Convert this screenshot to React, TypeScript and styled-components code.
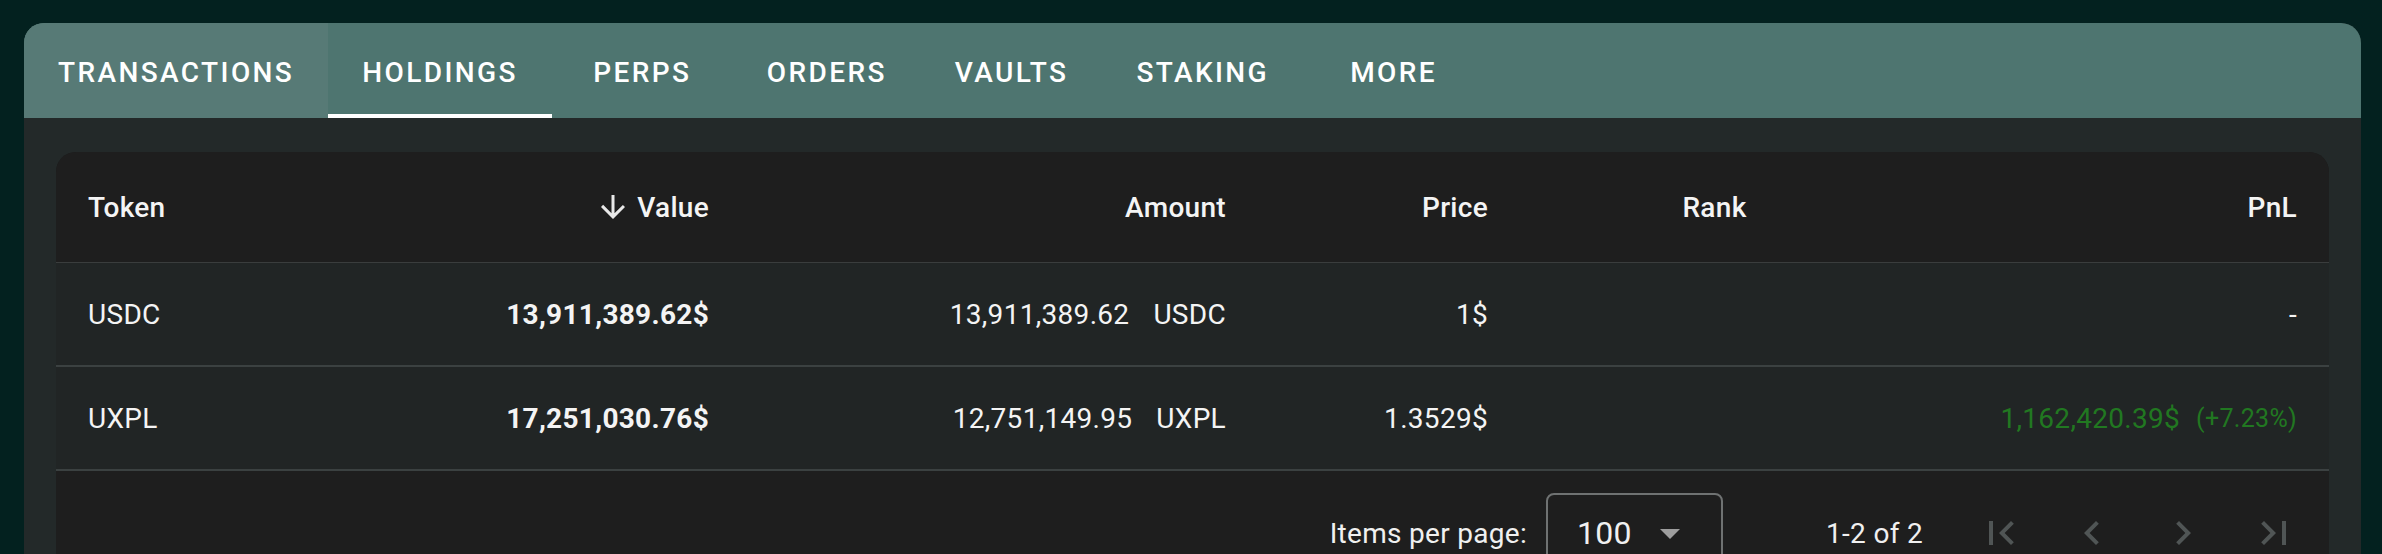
import * as React from 'react';
import styled, { createGlobalStyle } from 'styled-components';

const GlobalStyle = createGlobalStyle`
    html, body {
        margin: 0;
        height: 100%;
        overflow: hidden;
    }

    body {
        background: #03211f;
        font-family: Roboto, "Noto Sans", sans-serif;
        color: #fff;
    }
`;

const Page = styled.div`
    padding: 23px 21px 0 24px;
`;

const Card = styled.section`
    border-radius: 20px 20px 0 0;
    overflow: hidden;
    background: #232929;
`;

const TabBar = styled.nav`
    display: flex;
    height: 95px;
    background: #4e7570;
`;

const Tab = styled.div<{ $active?: boolean; $hover?: boolean }>`
    min-width: 181px;
    box-sizing: border-box;
    padding: 3px 34px 0;
    display: flex;
    align-items: center;
    justify-content: center;
    font-size: 28px;
    font-weight: 500;
    letter-spacing: 2.4px;
    text-transform: uppercase;
    color: #fff;
    background: ${p => (p.$hover ? '#577a76' : 'transparent')};
    box-shadow: ${p => (p.$active ? 'inset 0 -4px 0 #fff' : 'none')};
`;

const Content = styled.div`
    padding: 34px 32px 0;
`;

const TableCard = styled.div`
    border-radius: 20px 20px 0 0;
    overflow: hidden;
    background: #1e1e1e;
`;

const Row = styled.div<{ $head?: boolean }>`
    display: grid;
    grid-template-columns: 300px 385px 517px 262px 389px 1fr;
    height: ${p => (p.$head ? '110px' : '102px')};
    background: ${p => (p.$head ? '#1e1e1e' : '#212525')};
    border-bottom: ${p => (p.$head ? '1px solid #3a3d3d' : '2px solid #3b4141')};
    font-size: 28px;
    letter-spacing: 0.3px;
    font-weight: ${p => (p.$head ? 500 : 400)};
`;

const Cell = styled.div<{ $align?: 'left' | 'right' | 'center'; $bold?: boolean }>`
    padding: 0 32px;
    display: flex;
    align-items: center;
    justify-content: ${p =>
        p.$align === 'right' ? 'flex-end' : p.$align === 'center' ? 'center' : 'flex-start'};
    font-weight: ${p => (p.$bold ? 700 : 'inherit')};
    color: #f4f4f4;
    white-space: nowrap;
`;

const SortIcon = styled.svg`
    width: 36px;
    height: 36px;
    margin-right: 6px;
    fill: #e8e8e8;
`;

const Symbol = styled.span`
    margin-left: 24px;
`;

const Gain = styled.span`
    color: #217821;
`;

const GainPct = styled.span`
    margin-left: 16px;
    font-size: 25px;
    color: #217821;
`;

const Footer = styled.div`
    display: flex;
    align-items: center;
    justify-content: flex-end;
    height: 124px;
    padding-right: 10px;
    background: #1e1e1e;
    font-size: 28px;
    letter-spacing: 0.3px;
    color: #f0f0f0;
`;

const Label = styled.span`
    margin-right: 19px;
`;

const SelectBox = styled.div`
    width: 177px;
    height: 80px;
    box-sizing: border-box;
    border: 2px solid #6f7272;
    border-radius: 8px;
    display: flex;
    align-items: center;
    padding-left: 29px;
    margin-right: 103px;
    font-size: 32px;
`;

const DropIcon = styled.svg`
    width: 48px;
    height: 48px;
    margin-left: 14px;
    fill: #9e9e9e;
`;

const Displayed = styled.span`
    margin-right: 32px;
`;

const PageButton = styled.div`
    width: 91px;
    display: flex;
    justify-content: center;
    svg {
        width: 48px;
        height: 48px;
        fill: #505555;
    }
`;

interface Holding {
    token: string;
    value: string;
    amount: string;
    price: string;
    pnl?: string;
    pct?: string;
}

const holdings: Holding[] = [
    { token: 'USDC', value: '13,911,389.62$', amount: '13,911,389.62', price: '1$' },
    {
        token: 'UXPL',
        value: '17,251,030.76$',
        amount: '12,751,149.95',
        price: '1.3529$',
        pnl: '1,162,420.39$',
        pct: '(+7.23%)'
    }
];

const tabs = ['Transactions', 'Holdings', 'Perps', 'Orders', 'Vaults', 'Staking', 'More'];

const pageIcons = [
    'M18.41 16.59L13.82 12l4.59-4.59L17 6l-6 6 6 6zM6 6h2v12H6z',
    'M15.41 16.59L10.83 12l4.58-4.59L14 6l-6 6 6 6 1.41-1.41z',
    'M8.59 16.59L13.17 12 8.59 7.41 10 6l6 6-6 6-1.41-1.41z',
    'M5.59 7.41L10.18 12l-4.59 4.59L7 18l6-6-6-6zM16 6h2v12h-2z'
];

export default function App(): JSX.Element {
    return (
        <Page>
            <GlobalStyle />
            <Card>
                <TabBar>
                    {tabs.map(tab => (
                        <Tab key={tab} $active={tab === 'Holdings'} $hover={tab === 'Transactions'}>
                            {tab}
                        </Tab>
                    ))}
                </TabBar>
                <Content>
                    <TableCard>
                        <Row $head>
                            <Cell>Token</Cell>
                            <Cell $align="right">
                                <SortIcon viewBox="0 0 24 24">
                                    <path d="M20 12l-1.41-1.41L13 16.17V4h-2v12.17l-5.58-5.59L4 12l8 8 8-8z" />
                                </SortIcon>
                                Value
                            </Cell>
                            <Cell $align="right">Amount</Cell>
                            <Cell $align="right">Price</Cell>
                            <Cell $align="center">Rank</Cell>
                            <Cell $align="right">PnL</Cell>
                        </Row>
                        {holdings.map(h => (
                            <Row key={h.token}>
                                <Cell>{h.token}</Cell>
                                <Cell $align="right" $bold>{h.value}</Cell>
                                <Cell $align="right">
                                    {h.amount}
                                    <Symbol>{h.token}</Symbol>
                                </Cell>
                                <Cell $align="right">{h.price}</Cell>
                                <Cell $align="center" />
                                <Cell $align="right">
                                    {h.pnl ? (
                                        <>
                                            <Gain>{h.pnl}</Gain>
                                            <GainPct>{h.pct}</GainPct>
                                        </>
                                    ) : '-'}
                                </Cell>
                            </Row>
                        ))}
                        <Footer>
                            <Label>Items per page:</Label>
                            <SelectBox>
                                100
                                <DropIcon viewBox="0 0 24 24">
                                    <path d="M7 10l5 5 5-5z" />
                                </DropIcon>
                            </SelectBox>
                            <Displayed>1-2 of 2</Displayed>
                            {pageIcons.map(d => (
                                <PageButton key={d}>
                                    <svg viewBox="0 0 24 24"><path d={d} /></svg>
                                </PageButton>
                            ))}
                        </Footer>
                    </TableCard>
                </Content>
            </Card>
        </Page>
    );
}
